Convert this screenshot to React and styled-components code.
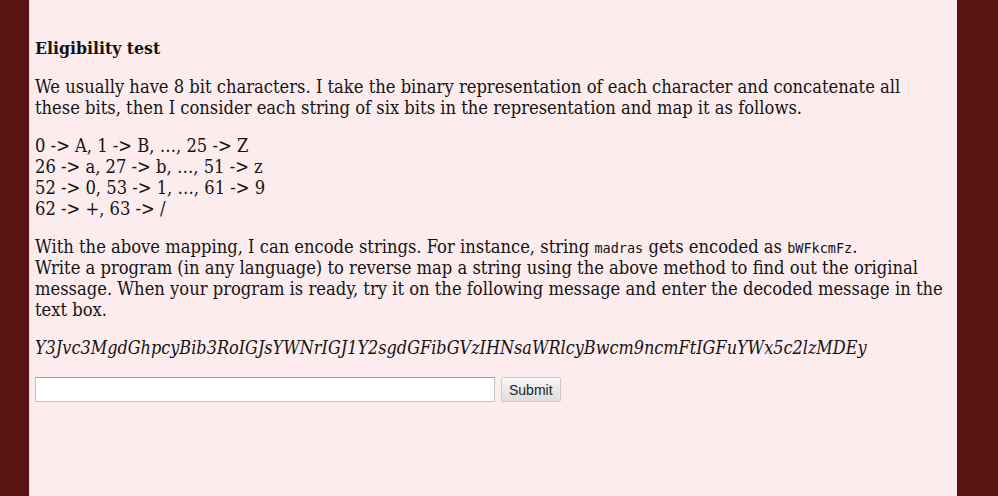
import styled, { createGlobalStyle } from "styled-components"

const GlobalStyle = createGlobalStyle`
  html, body {
    margin: 0;
    padding: 0;
    background: #581313;
    height: 100%;
  }
  #root {
    height: 100%;
  }
`

export default function App() {
  return (
    <>
      <GlobalStyle />
      <Page>
        <Panel>
          <Title>Eligibility test</Title>
          <Para>
            We usually have 8 bit characters. I take the binary representation of each character and
            concatenate all these bits, then I consider each string of six bits in the representation and
            map it as follows.
          </Para>
          <Para>
            0 -&gt; A, 1 -&gt; B, …, 25 -&gt; Z<br />
            26 -&gt; a, 27 -&gt; b, …, 51 -&gt; z<br />
            52 -&gt; 0, 53 -&gt; 1, …, 61 -&gt; 9<br />
            62 -&gt; +, 63 -&gt; /
          </Para>
          <Para>
            With the above mapping, I can encode strings. For instance, string <Code>madras</Code> gets
            encoded as <Code>bWFkcmFz</Code>.<br />
            Write a program (in any language) to reverse map a string using the above method to find out the
            original message. When your program is ready, try it on the following message and enter the
            decoded message in the text box.
          </Para>
          <Para>
            <em>Y3Jvc3MgdGhpcyBib3RoIGJsYWNrIGJ1Y2sgdGFibGVzIHNsaWRlcyBwcm9ncmFtIGFuYWx5c2lzMDEy</em>
          </Para>
          <AnswerForm onSubmit={(e) => e.preventDefault()}>
            <AnswerInput type="text" />
            <SubmitButton type="submit">Submit</SubmitButton>
          </AnswerForm>
        </Panel>
      </Page>
    </>
  )
}

const Page = styled.div`
  min-height: 100%;
  display: flex;
`
const Panel = styled.div`
  margin-left: 29px;
  width: 912px;
  padding: 30px 10px 0 5px;
  background-color: #fdeced;
  border-left: 1px solid #f3d6d6;
  color: #141414;
  font-family: "DejaVu Serif Condensed", "DejaVu Serif", serif;
  font-size: 18.2px;
  line-height: 21px;
`
const Title = styled.h3`
  margin: 8px 0 0 0;
  font-size: 17.5px;
  font-weight: 700;
`
const Para = styled.p`
  margin: 17px 0 0 0;
  em {
    font-style: italic;
    font-size: 17.9px;
  }
`
const Code = styled.code`
  font-family: "DejaVu Sans Mono", monospace;
  font-size: 13.5px;
  line-height: 0;
`
const AnswerForm = styled.form`
  display: flex;
  align-items: center;
  gap: 6px;
  margin-top: 19px;
`
const AnswerInput = styled.input`
  box-sizing: border-box;
  width: 460px;
  height: 25px;
  border: 1px solid #c4c4c4;
  border-top-color: #9e9e9e;
  background: #fff;
  margin: 0;
`
const SubmitButton = styled.button`
  box-sizing: border-box;
  height: 25px;
  padding: 0 7px;
  font-family: "Liberation Sans", Arial, sans-serif;
  font-size: 14px;
  color: #222;
  background: linear-gradient(#f6f6f6, #dedede);
  border: 1px solid #cdcdcd;
  border-radius: 2px;
`
